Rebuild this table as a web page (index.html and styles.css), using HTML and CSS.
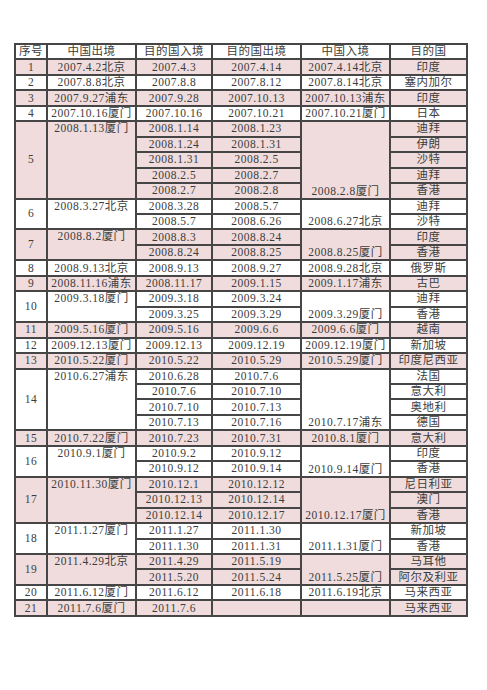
FILE: index.html
```html
<!DOCTYPE html>
<html lang="zh">
<head>
<meta charset="utf-8">
<title>出入境记录</title>
<link rel="stylesheet" href="styles.css">
</head>
<body>
<table class="log">
<colgroup>
<col class="c-no"><col class="c-out"><col class="c-in"><col class="c-leave"><col class="c-back"><col class="c-dest">
</colgroup>
<thead>
<tr><th>序号</th><th>中国出境</th><th>目的国入境</th><th>目的国出境</th><th>中国入境</th><th>目的国</th></tr>
</thead>
<tbody>
<tr class="pk"><td>1</td><td>2007.4.2北京</td><td>2007.4.3</td><td>2007.4.14</td><td>2007.4.14北京</td><td>印度</td></tr>
<tr><td>2</td><td>2007.8.8北京</td><td>2007.8.8</td><td>2007.8.12</td><td>2007.8.14北京</td><td>塞内加尔</td></tr>
<tr class="pk"><td>3</td><td>2007.9.27浦东</td><td>2007.9.28</td><td>2007.10.13</td><td>2007.10.13浦东</td><td>印度</td></tr>
<tr><td>4</td><td>2007.10.16厦门</td><td>2007.10.16</td><td>2007.10.21</td><td>2007.10.21厦门</td><td>日本</td></tr>

<tr class="pk"><td rowspan="5">5</td><td rowspan="5" class="top">2008.1.13厦门</td><td>2008.1.14</td><td>2008.1.23</td><td rowspan="5" class="bot">2008.2.8厦门</td><td>迪拜</td></tr>
<tr class="pk"><td>2008.1.24</td><td>2008.1.31</td><td>伊朗</td></tr>
<tr class="pk"><td>2008.1.31</td><td>2008.2.5</td><td>沙特</td></tr>
<tr class="pk"><td>2008.2.5</td><td>2008.2.7</td><td>迪拜</td></tr>
<tr class="pk"><td>2008.2.7</td><td>2008.2.8</td><td>香港</td></tr>

<tr><td rowspan="2">6</td><td rowspan="2" class="top">2008.3.27北京</td><td>2008.3.28</td><td>2008.5.7</td><td rowspan="2" class="bot">2008.6.27北京</td><td>迪拜</td></tr>
<tr><td>2008.5.7</td><td>2008.6.26</td><td>沙特</td></tr>

<tr class="pk"><td rowspan="2">7</td><td rowspan="2" class="top">2008.8.2厦门</td><td>2008.8.3</td><td>2008.8.24</td><td rowspan="2" class="bot">2008.8.25厦门</td><td>印度</td></tr>
<tr class="pk"><td>2008.8.24</td><td>2008.8.25</td><td>香港</td></tr>

<tr><td>8</td><td>2008.9.13北京</td><td>2008.9.13</td><td>2008.9.27</td><td>2008.9.28北京</td><td>俄罗斯</td></tr>
<tr class="pk"><td>9</td><td>2008.11.16浦东</td><td>2008.11.17</td><td>2009.1.15</td><td>2009.1.17浦东</td><td>古巴</td></tr>

<tr><td rowspan="2">10</td><td rowspan="2" class="top">2009.3.18厦门</td><td>2009.3.18</td><td>2009.3.24</td><td rowspan="2" class="bot">2009.3.29厦门</td><td>迪拜</td></tr>
<tr><td>2009.3.25</td><td>2009.3.29</td><td>香港</td></tr>

<tr class="pk"><td>11</td><td>2009.5.16厦门</td><td>2009.5.16</td><td>2009.6.6</td><td>2009.6.6厦门</td><td>越南</td></tr>
<tr><td>12</td><td>2009.12.13厦门</td><td>2009.12.13</td><td>2009.12.19</td><td>2009.12.19厦门</td><td>新加坡</td></tr>
<tr class="pk"><td>13</td><td>2010.5.22厦门</td><td>2010.5.22</td><td>2010.5.29</td><td>2010.5.29厦门</td><td>印度尼西亚</td></tr>

<tr><td rowspan="4">14</td><td rowspan="4" class="top">2010.6.27浦东</td><td>2010.6.28</td><td>2010.7.6</td><td rowspan="4" class="bot">2010.7.17浦东</td><td>法国</td></tr>
<tr><td>2010.7.6</td><td>2010.7.10</td><td>意大利</td></tr>
<tr><td>2010.7.10</td><td>2010.7.13</td><td>奥地利</td></tr>
<tr><td>2010.7.13</td><td>2010.7.16</td><td>德国</td></tr>

<tr class="pk"><td>15</td><td>2010.7.22厦门</td><td>2010.7.23</td><td>2010.7.31</td><td>2010.8.1厦门</td><td>意大利</td></tr>

<tr><td rowspan="2">16</td><td rowspan="2" class="top">2010.9.1厦门</td><td>2010.9.2</td><td>2010.9.12</td><td rowspan="2" class="bot">2010.9.14厦门</td><td>印度</td></tr>
<tr><td>2010.9.12</td><td>2010.9.14</td><td>香港</td></tr>

<tr class="pk"><td rowspan="3">17</td><td rowspan="3" class="top">2010.11.30厦门</td><td>2010.12.1</td><td>2010.12.12</td><td rowspan="3" class="bot">2010.12.17厦门</td><td>尼日利亚</td></tr>
<tr class="pk"><td>2010.12.13</td><td>2010.12.14</td><td>澳门</td></tr>
<tr class="pk"><td>2010.12.14</td><td>2010.12.17</td><td>香港</td></tr>

<tr><td rowspan="2">18</td><td rowspan="2" class="top">2011.1.27厦门</td><td>2011.1.27</td><td>2011.1.30</td><td rowspan="2" class="bot">2011.1.31厦门</td><td>新加坡</td></tr>
<tr><td>2011.1.30</td><td>2011.1.31</td><td>香港</td></tr>

<tr class="pk"><td rowspan="2">19</td><td rowspan="2" class="top">2011.4.29北京</td><td>2011.4.29</td><td>2011.5.19</td><td rowspan="2" class="bot">2011.5.25厦门</td><td>马耳他</td></tr>
<tr class="pk"><td>2011.5.20</td><td>2011.5.24</td><td>阿尔及利亚</td></tr>

<tr><td>20</td><td>2011.6.12厦门</td><td>2011.6.12</td><td>2011.6.18</td><td>2011.6.19北京</td><td>马来西亚</td></tr>
<tr class="pk"><td>21</td><td>2011.7.6厦门</td><td>2011.7.6</td><td></td><td></td><td>马来西亚</td></tr>
</tbody>
</table>
</body>
</html>
```

FILE: styles.css
```css
html, body {
  margin: 0;
  padding: 0;
  background: #ffffff;
}

body {
  padding: 43px 0 0 14px;
}

.log {
  border-collapse: collapse;
  table-layout: fixed;
  width: 452px;
  font-family: "Liberation Serif", "Noto Sans CJK SC", serif;
  font-size: 11.5px;
  letter-spacing: 0.5px;
  color: #3c3c3c;
}

.c-no { width: 32px; }
.c-out { width: 89px; }
.c-in { width: 76px; }
.c-leave { width: 89px; }
.c-back { width: 89px; }
.c-dest { width: 77px; }

.log th,
.log td {
  border: 2px solid #464646;
  height: 15.46px;
  padding: 0;
  line-height: 13px;
  text-align: center;
  vertical-align: middle;
  white-space: nowrap;
  overflow: hidden;
  box-sizing: border-box;
}

.log th {
  font-weight: normal;
  background: #ffffff;
}

.log tr.pk td {
  background: #f0dcdc;
}

.log td.top {
  vertical-align: top;
  padding-top: 0;
}

.log td.bot {
  vertical-align: bottom;
  padding-bottom: 0;
}
```
